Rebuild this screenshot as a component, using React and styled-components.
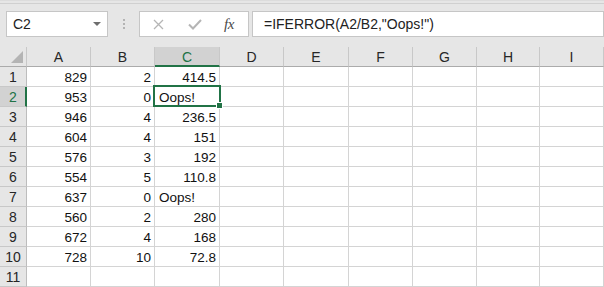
import React from "react";
import styled, { createGlobalStyle } from "styled-components";

const GREEN = "#217346";
const GRID = "#d4d4d4";
const HEAD_BG = "#e6e6e6";

const Global = createGlobalStyle`
  html, body { margin: 0; padding: 0; background: #e6e6e6; }
  body { font-family: "Liberation Sans", Arial, sans-serif; }
  * { box-sizing: border-box; }
`;

const Window = styled.div`
  width: 604px;
  height: 287px;
  overflow: hidden;
  background: ${HEAD_BG};
  border-top: 1px solid #dcdcdc;
  padding-top: 2px;
`;

const TopStrip = styled.div`
  height: 1px;
  background: #d0d0d0;
  margin-bottom: 7px;
`;

const FormulaBar = styled.div`
  display: flex;
  align-items: stretch;
  height: 26px;
  padding-left: 6px;
  margin-bottom: 10px;
`;

const NameBox = styled.div`
  width: 102px;
  background: #fff;
  border: 1px solid #c6c6c6;
  display: flex;
  align-items: center;
  justify-content: space-between;
  padding: 0 6px;
  font-size: 14px;
  color: #222;
`;

const DropArrow = styled.span`
  width: 0;
  height: 0;
  border-left: 4px solid transparent;
  border-right: 4px solid transparent;
  border-top: 4px solid #6e6e6e;
`;

const Grip = styled.div`
  width: 31px;
  display: flex;
  flex-direction: column;
  align-items: center;
  justify-content: center;
  gap: 2px;
  padding-left: 1px;
`;

const GripDot = styled.span`
  width: 2px;
  height: 2px;
  background: #b3b3b3;
`;

const ButtonBox = styled.div`
  width: 110px;
  background: #fff;
  border: 1px solid #c6c6c6;
  display: flex;
  align-items: center;
  padding-left: 13px;
`;

const IconSlot = styled.span`
  width: ${(p) => p.w}px;
  display: flex;
  align-items: center;
`;

const Fx = styled.span`
  font-family: "Liberation Serif", "Times New Roman", serif;
  font-style: italic;
  font-size: 15px;
  color: #4a4a4a;
  letter-spacing: -0.5px;
`;

const FormulaInput = styled.div`
  flex: 1;
  margin-left: 3px;
  background: #fff;
  border: 1px solid #c6c6c6;
  display: flex;
  align-items: center;
  padding-left: 11px;
  font-size: 14px;
  color: #222;
`;

const COLS = [
  { id: "A", w: 64 },
  { id: "B", w: 64 },
  { id: "C", w: 65 },
  { id: "D", w: 64 },
  { id: "E", w: 65 },
  { id: "F", w: 64 },
  { id: "G", w: 64 },
  { id: "H", w: 63 },
  { id: "I", w: 64 },
];

const Sheet = styled.div`
  display: grid;
  grid-template-columns: 27px ${COLS.map((c) => c.w + "px").join(" ")};
  grid-auto-rows: 20px;
  position: relative;
`;

const Corner = styled.div`
  background: ${HEAD_BG};
  border-right: 1px solid #c8c8c8;
  border-bottom: 1px solid #ababab;
  position: relative;
`;

const CornerTri = styled.svg`
  position: absolute;
  left: 11px;
  top: 4px;
`;

const ColHead = styled.div`
  background: ${(p) => (p.active ? "#d2d2d2" : HEAD_BG)};
  color: ${(p) => (p.active ? GREEN : "#262626")};
  border-right: 1px solid #c8c8c8;
  border-bottom: ${(p) => (p.active ? `2px solid ${GREEN}` : "1px solid #ababab")};
  display: flex;
  align-items: center;
  justify-content: center;
  font-size: 14px;
  padding-top: ${(p) => (p.active ? "2px" : "1px")};
`;

const RowHead = styled.div`
  background: ${(p) => (p.active ? "#d2d2d2" : HEAD_BG)};
  color: ${(p) => (p.active ? GREEN : "#262626")};
  border-right: ${(p) => (p.active ? `2px solid ${GREEN}` : "1px solid #bdbdbd")};
  border-bottom: 1px solid #c8c8c8;
  display: flex;
  align-items: center;
  justify-content: center;
  font-size: 14px;
  padding-top: 1px;
  padding-left: ${(p) => (p.active ? "1px" : "0")};
`;

const Cell = styled.div`
  background: #fff;
  border-right: 1px solid ${GRID};
  border-bottom: 1px solid ${GRID};
  display: flex;
  align-items: center;
  justify-content: ${(p) => (p.align === "left" ? "flex-start" : "flex-end")};
  padding: 2px 3px 0 4px;
  color: #111;
  white-space: nowrap;
  font-size: 13.5px;
`;

const ActiveBox = styled.div`
  position: absolute;
  left: 153px;
  top: 38px;
  width: 68px;
  height: 22px;
  border: 2px solid ${GREEN};
  pointer-events: none;
`;

const FillHandle = styled.div`
  position: absolute;
  right: -4px;
  bottom: -4px;
  width: 7px;
  height: 7px;
  background: ${GREEN};
  border: 1px solid #fff;
`;

const data = [
  [829, 2, "414.5"],
  [953, 0, "Oops!"],
  [946, 4, "236.5"],
  [604, 4, "151"],
  [576, 3, "192"],
  [554, 5, "110.8"],
  [637, 0, "Oops!"],
  [560, 2, "280"],
  [672, 4, "168"],
  [728, 10, "72.8"],
];

export default function App() {
  const rows = [];
  for (let r = 1; r <= 11; r++) {
    const d = data[r - 1];
    rows.push(
      <RowHead key={`rh${r}`} active={r === 2}>
        {r}
      </RowHead>
    );
    COLS.forEach((c, i) => {
      let v = "";
      let align = "right";
      if (d && i < 3) {
        v = d[i];
        if (v === "Oops!") align = "left";
      }
      rows.push(
        <Cell key={`c${r}${c.id}`} align={align}>
          {v}
        </Cell>
      );
    });
  }

  return (
    <>
      <Global />
      <Window>
        <TopStrip />
        <FormulaBar>
          <NameBox>
            <span>C2</span>
            <DropArrow />
          </NameBox>
          <Grip>
            <GripDot />
            <GripDot />
            <GripDot />
          </Grip>
          <ButtonBox>
            <IconSlot w={35}>
              <svg width="11" height="11" viewBox="0 0 11 11">
                <path d="M1 1 L10 10 M10 1 L1 10" stroke="#b5b5b5" strokeWidth="1.3" fill="none" />
              </svg>
            </IconSlot>
            <IconSlot w={36}>
              <svg width="14" height="11" viewBox="0 0 14 11">
                <path d="M1 5.5 L5 9.5 L13 1" stroke="#b5b5b5" strokeWidth="2" fill="none" />
              </svg>
            </IconSlot>
            <IconSlot w={20}>
              <Fx>fx</Fx>
            </IconSlot>
          </ButtonBox>
          <FormulaInput>=IFERROR(A2/B2,"Oops!")</FormulaInput>
        </FormulaBar>
        <Sheet>
          <Corner>
            <CornerTri width="13" height="13" viewBox="0 0 13 13">
              <polygon points="12,0 12,12 0,12" fill="#b4b4b4" />
            </CornerTri>
          </Corner>
          {COLS.map((c) => (
            <ColHead key={c.id} active={c.id === "C"}>
              {c.id}
            </ColHead>
          ))}
          {rows}
          <ActiveBox>
            <FillHandle />
          </ActiveBox>
        </Sheet>
      </Window>
    </>
  );
}
